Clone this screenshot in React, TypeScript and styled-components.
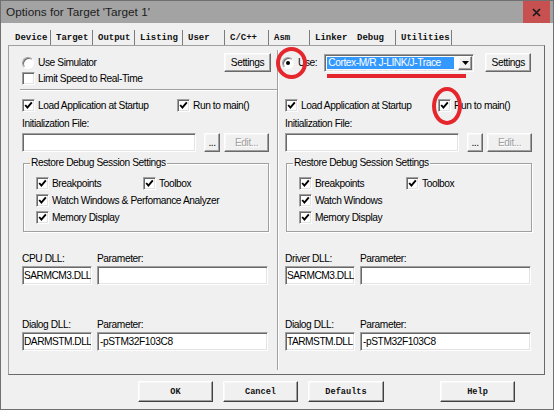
import React from 'react'
import styled, { createGlobalStyle, css } from 'styled-components'

//#region styles
const GlobalStyle = createGlobalStyle`
  html, body {
    margin: 0;
    padding: 0;
    background: #f0f0f0;
  }
  body {
    width: 554px;
    height: 410px;
    overflow: hidden;
    font-family: 'Liberation Sans', Arial, sans-serif;
    font-size: 10.2px;
    letter-spacing: -0.42px;
    color: #000;
  }
`

const raised = css`
  box-sizing: border-box;
  background: #f0f0f0;
  border: 1px solid;
  border-color: #fff #696969 #696969 #fff;
  box-shadow: inset -1px -1px 0 #a0a0a0, inset 1px 1px 0 #f8f8f8;
`

const sunken = css`
  box-sizing: border-box;
  background: #fff;
  border: 1px solid;
  border-color: #a0a0a0 #fff #fff #a0a0a0;
  box-shadow: inset 1px 1px 0 #696969, inset -1px -1px 0 #e3e3e3;
`

const monoBold = css`
  font-family: 'Liberation Mono', 'DejaVu Sans Mono', monospace;
  font-weight: bold;
  letter-spacing: 0;
  color: #111;
`

const Window = styled.div`
  position: relative;
  width: 554px;
  height: 410px;
  box-sizing: border-box;
  border: 1px solid #707070;
  background: #f0f0f0;
  display: flex;
  flex-direction: column;
`

const TitleBar = styled.div`
  height: 22px;
  flex-shrink: 0;
  background: #a3a3a3;
  display: flex;
  align-items: center;
  justify-content: space-between;
  padding-left: 5px;
`

const Title = styled.span`
  font-family: 'Liberation Sans', Arial, sans-serif;
  font-size: 11.8px;
  letter-spacing: 0;
  color: #1c1c1c;
`

const CloseButton = styled.div`
  width: 27px;
  height: 22px;
  margin-right: 3px;
  background: #c75050;
  display: flex;
  align-items: center;
  justify-content: center;
`

const Body = styled.div`
  flex: 1;
  display: flex;
  flex-direction: column;
  padding: 0 8px 0 7px;
`

const TabStrip = styled.div`
  height: 15px;
  margin-top: 7px;
  padding-left: 2px;
  display: flex;
`

const Tab = styled.div<{ $w: number; $sep: boolean }>`
  ${monoBold};
  font-size: 9px;
  width: ${(p) => p.$w}px;
  box-sizing: border-box;
  height: 15px;
  padding-left: 5px;
  display: flex;
  align-items: center;
  white-space: pre;
  border-right: 1px solid ${(p) => (p.$sep ? '#7c7c7c' : 'transparent')};
`

const Panel = styled.div`
  height: 330px;
  box-sizing: border-box;
  border: 1px solid;
  border-color: #a0a0a0 #696969 #696969 #a0a0a0;
  display: flex;
`

const Column = styled.div<{ $w?: number; $pl: number }>`
  ${(p) => (p.$w ? `width: ${p.$w}px;` : 'flex: 1;')}
  box-sizing: border-box;
  padding: 7px 0 0 ${(p) => p.$pl}px;
  display: flex;
  flex-direction: column;
`

const ColumnDivider = styled.div`
  width: 1px;
  margin: 4px 0;
  background: #a0a0a0;
  box-shadow: 1px 0 0 #fff;
`

const TopSection = styled.div`
  height: 38px;
  display: flex;
  flex-direction: column;
`

const Row = styled.div<{ $h: number; $mt?: number }>`
  height: ${(p) => p.$h}px;
  margin-top: ${(p) => p.$mt ?? 0}px;
  display: flex;
  align-items: center;
`

const Separator = styled.div`
  margin-top: auto;
  margin-left: -2px;
  height: 1px;
  background: #a0a0a0;
  border-bottom: 1px solid #fff;
`

const Option = styled.label<{ $w?: number; $ml?: number }>`
  display: flex;
  align-items: center;
  gap: 3px;
  white-space: nowrap;
  margin-left: ${(p) => p.$ml ?? 0}px;
  ${(p) => (p.$w ? `width: ${p.$w}px;` : '')}
`

const Box = styled.span`
  ${sunken};
  width: 13px;
  height: 13px;
  flex-shrink: 0;
  display: inline-flex;
  align-items: center;
  justify-content: center;
`

const RadioCircle = styled.span<{ $on?: boolean }>`
  width: 12px;
  height: 12px;
  flex-shrink: 0;
  box-sizing: border-box;
  border-radius: 50%;
  border: 1px solid;
  border-color: #a0a0a0 #fff #fff #a0a0a0;
  background: #fff;
  box-shadow: inset 1px 1px 0 #696969;
  display: inline-flex;
  align-items: center;
  justify-content: center;
  margin-right: 1px;

  &::after {
    content: '';
    width: 4px;
    height: 4px;
    border-radius: 50%;
    background: ${(p) => (p.$on ? '#000' : 'transparent')};
  }
`

const Button = styled.button<{ $w: number; $h?: number; $ml?: number | 'auto'; $mr?: number; $disabled?: boolean }>`
  ${raised};
  width: ${(p) => p.$w}px;
  height: ${(p) => p.$h ?? 19}px;
  margin: 0 ${(p) => p.$mr ?? 0}px 0 ${(p) => (p.$ml === 'auto' ? 'auto' : `${p.$ml ?? 0}px`)};
  padding: 0;
  font: inherit;
  letter-spacing: inherit;
  color: ${(p) => (p.$disabled ? '#a0a0a0' : '#000')};
  text-shadow: ${(p) => (p.$disabled ? '1px 1px 0 #fff' : 'none')};
  display: flex;
  align-items: center;
  justify-content: center;
`

const DialogButton = styled(Button)`
  ${monoBold};
  font-size: 8.6px;
  height: 21px;
  border-color: #fff #404040 #404040 #fff;
`

const Combo = styled.div`
  ${sunken};
  width: 150px;
  height: 18px;
  margin-left: 7px;
  padding: 2px 1px 2px 2px;
  display: flex;
`

const ComboValue = styled.div`
  flex: 1;
  margin-right: 4px;
  padding-left: 1px;
  background: #3399ff;
  color: #fff;
  display: flex;
  align-items: center;
  white-space: nowrap;
`

const ComboArrow = styled.div`
  ${raised};
  width: 14px;
  margin-top: -1px;
  margin-bottom: -1px;
  display: flex;
  align-items: center;
  justify-content: center;
`

const TextField = styled.div<{ $w: number; $h?: number }>`
  ${sunken};
  width: ${(p) => p.$w}px;
  height: ${(p) => p.$h ?? 19}px;
  padding-left: 2px;
  display: flex;
  align-items: center;
  white-space: nowrap;
  overflow: hidden;
`

const DllField = styled(TextField)`
  padding-left: 1px;
  letter-spacing: -0.5px;
`

const FieldLabel = styled.div<{ $mt?: number }>`
  height: 12px;
  line-height: 12px;
  margin-top: ${(p) => p.$mt ?? 0}px;
  white-space: nowrap;
`

const FileRow = styled.div`
  height: 19px;
  margin-top: 3px;
  display: flex;
  align-items: stretch;
  gap: 4px;
`

const Group = styled.fieldset`
  width: 246px;
  box-sizing: border-box;
  margin: 5px 0 0 1px;
  padding: 6px 0 5px 12px;
  border: 1px solid #a0a0a0;
  box-shadow: inset 1px 1px 0 #fff, 1px 1px 0 #fff;
  min-width: 0;
`

const Legend = styled.legend`
  padding: 0 1px;
  margin-left: -6px;
  line-height: 12px;
`

const GroupRow = styled.div`
  height: 17px;
  display: flex;
  align-items: center;
`

const DllGrid = styled.div<{ $mt: number }>`
  margin-top: ${(p) => p.$mt}px;
  display: grid;
  grid-template-columns: 70px 171px;
  column-gap: 5px;
  row-gap: 1px;
`

const ButtonRow = styled.div`
  margin-top: 6px;
  padding-left: 130px;
  display: flex;
  gap: 10px;
`

const RedRing = styled.div<{ $x: number; $y: number; $w: number; $h: number }>`
  position: absolute;
  left: ${(p) => p.$x}px;
  top: ${(p) => p.$y}px;
  width: ${(p) => p.$w}px;
  height: ${(p) => p.$h}px;
  box-sizing: border-box;
  border: 4px solid #e5262c;
  border-radius: 50%;
  pointer-events: none;
`

const RedBar = styled.div`
  position: absolute;
  left: 326px;
  top: 73px;
  width: 139px;
  height: 4px;
  background: #e5262c;
`
//#endregion

const CheckMark = () => (
  <svg width='9' height='9' viewBox='0 0 9 9'>
    <path d='M1.2 4 L3.4 6.6 L7.8 1.4' fill='none' stroke='#000' strokeWidth='1.9' />
  </svg>
)

const Check = ({ label, on = true, w }: { label: string; on?: boolean; w?: number }) => (
  <Option $w={w}>
    <Box>{on && <CheckMark />}</Box>
    <span>{label}</span>
  </Option>
)

const tabs = [
  { label: 'Device', w: 41 },
  { label: 'Target', w: 42 },
  { label: 'Output', w: 42 },
  { label: 'Listing', w: 48 },
  { label: 'User', w: 42 },
  { label: 'C/C++', w: 44 },
  { label: 'Asm', w: 41 },
  { label: 'Linker', w: 42, sep: false },
  { label: 'Debug', w: 44 },
  { label: 'Utilities', w: 56 },
]

const SessionGroup = ({ watchLabel }: { watchLabel: string }) => (
  <Group>
    <Legend>Restore Debug Session Settings</Legend>
    <GroupRow>
      <Check label='Breakpoints' w={107} />
      <Check label='Toolbox' />
    </GroupRow>
    <GroupRow>
      <Check label={watchLabel} />
    </GroupRow>
    <GroupRow>
      <Check label='Memory Display' />
    </GroupRow>
  </Group>
)

const InitFile = () => (
  <>
    <FieldLabel $mt={6}>Initialization File:</FieldLabel>
    <FileRow>
      <TextField $w={174} />
      <Button $w={16} $ml={4}>...</Button>
      <Button $w={45} $disabled>Edit...</Button>
    </FileRow>
  </>
)

const DllFields = ({ first, dll1, dll2 }: { first: string; dll1: string; dll2: string }) => (
  <>
    <DllGrid $mt={21}>
      <FieldLabel>{first}</FieldLabel>
      <FieldLabel>Parameter:</FieldLabel>
      <DllField $w={70}>{dll1}</DllField>
      <TextField $w={171} />
    </DllGrid>
    <DllGrid $mt={34}>
      <FieldLabel>Dialog DLL:</FieldLabel>
      <FieldLabel>Parameter:</FieldLabel>
      <DllField $w={70}>{dll2}</DllField>
      <TextField $w={171}>-pSTM32F103C8</TextField>
    </DllGrid>
  </>
)

const App = () => {
  return (
    <>
      <GlobalStyle />
      <Window>
        <TitleBar>
          <Title>Options for Target 'Target 1'</Title>
          <CloseButton>
            <svg width='9' height='9' viewBox='0 0 9 9'>
              <path d='M1 1 L8 8 M8 1 L1 8' stroke='#1a1a1a' strokeWidth='1.7' />
            </svg>
          </CloseButton>
        </TitleBar>
        <Body>
          <TabStrip>
            {tabs.map((t) => (
              <Tab key={t.label} $w={t.w} $sep={t.sep !== false}>
                {t.label}
              </Tab>
            ))}
          </TabStrip>
          <Panel>
            <Column $w={268} $pl={13}>
              <TopSection>
                <Row $h={19}>
                  <Option>
                    <RadioCircle />
                    <span>Use Simulator</span>
                  </Option>
                  <Button $w={47} $ml='auto' $mr={6}>
                    Settings
                  </Button>
                </Row>
                <Row $h={12}>
                  <Check label='Limit Speed to Real-Time' on={false} />
                </Row>
                <Separator />
              </TopSection>
              <Row $h={13} $mt={8}>
                <Check label='Load Application at Startup' w={155} />
                <Check label='Run to main()' />
              </Row>
              <InitFile />
              <SessionGroup watchLabel='Watch Windows & Perfomance Analyzer' />
              <DllFields first='CPU DLL:' dll1='SARMCM3.DLL' dll2='DARMSTM.DLL' />
            </Column>
            <ColumnDivider />
            <Column $pl={7}>
              <TopSection>
                <Row $h={19}>
                  <Option $ml={-3}>
                    <RadioCircle $on />
                    <span>Use:</span>
                  </Option>
                  <Combo>
                    <ComboValue>Cortex-M/R J-LINK/J-Trace</ComboValue>
                    <ComboArrow>
                      <svg width='7' height='4' viewBox='0 0 7 4'>
                        <path d='M0 0 H7 L3.5 4 Z' fill='#000' />
                      </svg>
                    </ComboArrow>
                  </Combo>
                  <Button $w={46} $ml={11}>
                    Settings
                  </Button>
                </Row>
              </TopSection>
              <Row $h={13} $mt={8}>
                <Check label='Load Application at Startup' w={153} />
                <Check label='Run to main()' />
              </Row>
              <InitFile />
              <SessionGroup watchLabel='Watch Windows' />
              <DllFields first='Driver DLL:' dll1='SARMCM3.DLL' dll2='TARMSTM.DLL' />
            </Column>
          </Panel>
          <ButtonRow>
            <DialogButton $w={75}>OK</DialogButton>
            <DialogButton $w={75}>Cancel</DialogButton>
            <DialogButton $w={76}>Defaults</DialogButton>
            <DialogButton $w={75} $ml={46}>
              Help
            </DialogButton>
          </ButtonRow>
        </Body>
        <RedRing $x={275} $y={46} $w={31} $h={32} />
        <RedRing $x={431} $y={86} $w={30} $h={38} />
        <RedBar />
      </Window>
    </>
  )
}

export default App
